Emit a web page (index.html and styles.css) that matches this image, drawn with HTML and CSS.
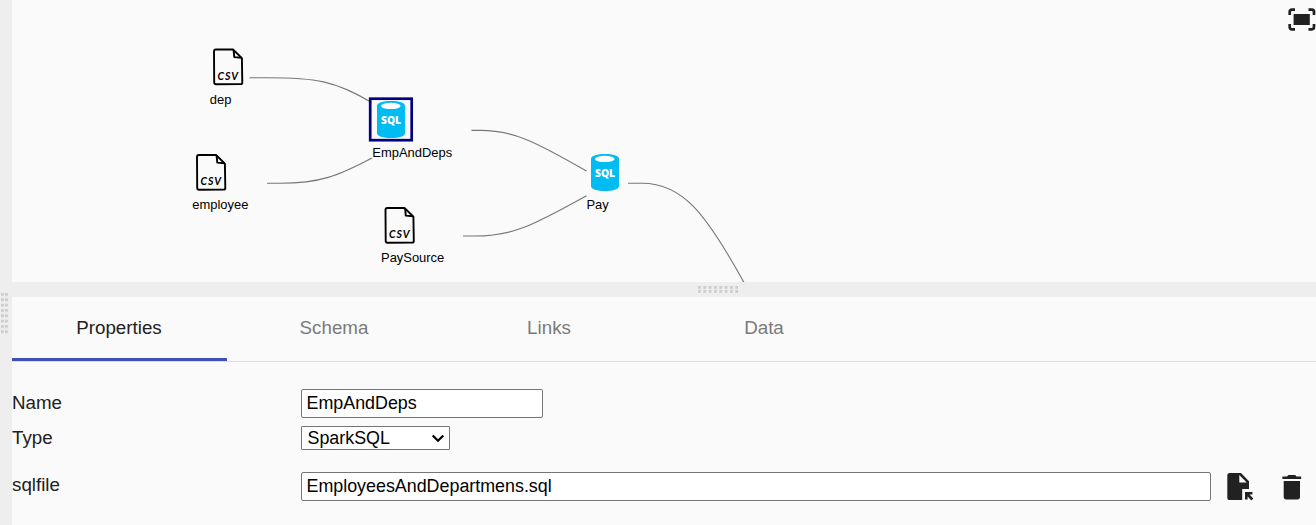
FILE: index.html
```html
<!DOCTYPE html>
<html lang="en">
<head>
<meta charset="utf-8">
<title>Pipeline editor</title>
<link rel="stylesheet" href="styles.css">
</head>
<body>
<div class="app">
  <div class="side-splitter">
    <svg class="grip" width="12" height="42">
      <defs>
        <pattern id="gripV" width="4.1" height="5.33" patternUnits="userSpaceOnUse" x="1" y="0"><rect width="3" height="2.9" fill="#cecece"/></pattern>
      </defs>
      <rect x="1" y="0" width="7.2" height="41" fill="url(#gripV)"/>
    </svg>
  </div>
  <main class="main">
    <section class="canvas">
      <svg class="graph" viewBox="12 0 1304 282" width="1304" height="282">
        <defs>
          <g id="csv">
            <path d="M2.8 1H20L28.9 9.6 29.3 34Q29.3 35.6 27.6 35.6L3 35.7Q1.2 35.7 1.2 34L1 3Q1 1 2.8 1Z" fill="none" stroke="#000" stroke-width="1.9" stroke-linejoin="round"/>
            <path d="M20.6 1.6L21.3 8.6 28.4 9.2" fill="none" stroke="#000" stroke-width="1.9" stroke-linejoin="round"/>
            <text class="csv-text" x="4.6" y="31.4">CSV</text>
          </g>
          <g id="sql">
            <path d="M0 5C0 1.8 6 0 14 0S28 1.8 28 5V32C28 35.3 22 37 14 37S0 35.3 0 32Z" fill="#00bcf2"/>
            <ellipse cx="13.8" cy="4.9" rx="9.8" ry="3.2" fill="#fff"/>
            <text class="sql-text" x="4" y="23.4" textLength="20" lengthAdjust="spacingAndGlyphs">SQL</text>
          </g>
        </defs>
        <g class="links">
          <path d="M249.5 77.7H267C315 77.7 335 80.5 371.5 102.5"/>
          <path d="M267 183.3H280C320 183.3 338 176 372 158"/>
          <path d="M471.5 130.4H480C512 130.4 532 139.5 586.5 171"/>
          <path d="M463 236H475C512 236 530 227 586.5 195.7"/>
          <path d="M628 183.2H642C682 183.2 705 212 744 282.5"/>
        </g>
        <use href="#csv" x="213" y="48.5"/>
        <use href="#csv" x="196" y="154"/>
        <use href="#csv" x="384.5" y="207"/>
        <rect x="370.2" y="98.7" width="41.5" height="41.5" fill="none" stroke="#000080" stroke-width="2.7"/>
        <use href="#sql" x="377" y="101"/>
        <use href="#sql" x="591" y="154"/>
        <g class="node-label">
          <text x="209.8" y="104">dep</text>
          <text x="192.3" y="209">employee</text>
          <text x="372.3" y="157">EmpAndDeps</text>
          <text x="381" y="262">PaySource</text>
          <text x="586.4" y="209">Pay</text>
        </g>
      </svg>
      <svg class="fit" width="28" height="23" viewBox="0 0 28 23">
        <path d="M1.7 7V3.9Q1.7 1.7 3.9 1.7H7M20.5 1.7H23.8Q26 1.7 26 3.9V7M26 16V19.1Q26 21.3 23.8 21.3H20.5M7 21.3H3.9Q1.7 21.3 1.7 19.1V16" fill="none" stroke="#212121" stroke-width="2.7"/>
        <rect x="5.6" y="6" width="16.2" height="11" fill="#212121"/>
      </svg>
    </section>
    <div class="splitter">
      <svg class="grip-h" width="42" height="7">
        <defs>
          <pattern id="gripH" width="5.33" height="4.1" patternUnits="userSpaceOnUse"><rect width="2.9" height="3" fill="#cecece"/></pattern>
        </defs>
        <rect width="40.2" height="7.2" fill="url(#gripH)"/>
      </svg>
    </div>
    <nav class="tabs">
      <div class="tab active">Properties</div>
      <div class="tab">Schema</div>
      <div class="tab">Links</div>
      <div class="tab">Data</div>
    </nav>
    <section class="form">
      <div class="row row-name">
        <label class="label" for="name">Name</label>
        <input class="field name" id="name" value="EmpAndDeps">
      </div>
      <div class="row row-type">
        <label class="label">Type</label>
        <div class="select"><span>SparkSQL</span>
          <svg width="14" height="9" viewBox="0 0 14 9"><path d="M1.7 1.5L7 6.8 12.3 1.5" fill="none" stroke="#000" stroke-width="2.2"/></svg>
        </div>
      </div>
      <div class="row row-file">
        <label class="label" for="file">sqlfile</label>
        <input class="field file" id="file" value="EmployeesAndDepartmens.sql">
        <svg class="open-icon" width="27" height="28" viewBox="0 0 27 28">
          <path d="M2.8 0H14L22 8.2V16H15.2V27H2.8Q.3 27 .3 24.4V2.6Q.3 0 2.8 0ZM12.3 2V9.4H19.7Z" fill="#212121" fill-rule="evenodd"/>
          <path d="M18 19H25.4V21.6H22.5L26.3 25.4 24.4 27.4 20.6 23.6V26.4H18Z" fill="#212121"/>
        </svg>
        <svg class="delete-icon" width="20" height="25" viewBox="0 0 20 25">
          <path d="M1.7 6H18V21.8Q18 24.4 15.4 24.4H4.3Q1.7 24.4 1.7 21.8ZM.4 1.4H5L6.4 0H13.1L14.5 1.4H19.2V4H.4Z" fill="#212121"/>
        </svg>
      </div>
    </section>
  </main>
</div>
</body>
</html>
```
FILE: styles.css
```css
* { box-sizing: border-box; }
body {
  margin: 0;
  background: #fafafa;
  color: #212121;
  font-family: "Liberation Sans", Arial, sans-serif;
  font-size: 18.76px;
}
svg { display: block; flex: none; }
.app { display: flex; height: 525px; overflow: hidden; }
.side-splitter { width: 12px; flex: none; background: #eee; padding-top: 293px; }
.main { flex: 1; display: flex; flex-direction: column; min-width: 0; }
.canvas { position: relative; height: 282px; overflow: hidden; flex: none; }
.links path { fill: none; stroke: #777; stroke-width: 1.1; }
.node-label { font-size: 12.95px; fill: #000; }
.csv-text { font: italic 700 10.5px Lato, sans-serif; letter-spacing: 0.9px; fill: #000; }
.sql-text { font: 800 11px "Open Sans", sans-serif; fill: #fff; }
.fit { position: absolute; right: 0; top: 8px; }
.splitter { height: 15px; flex: none; background: #eee; display: flex; padding: 4px 0 0 686px; }
.tabs { display: flex; height: 65px; flex: none; border-bottom: 1px solid #dcdcdc; }
.tab {
  width: 215px;
  height: 64px;
  padding-right: 1px;
  line-height: 61px;
  text-align: center;
  color: #7a7a7a;
}
.tab.active { color: #212121; border-bottom: 3px solid #3f51b5; }
.form { display: flex; flex-direction: column; padding-top: 27px; }
.row { display: flex; align-items: center; }
.row-name { height: 29px; }
.row-type { height: 24px; margin-top: 8px; }
.row-file { height: 29px; margin-top: 22px; }
.label { width: 289px; flex: none; line-height: 24px; }
.row-name .label { padding-bottom: 2px; }
.row-file .label { padding-bottom: 4px; }
.field {
  height: 29px;
  padding: 0 4px 0 4.5px;
  border: 1px solid #767676;
  border-radius: 2px;
  background: #fff;
  color: #000;
  font: 17.86px "Liberation Sans", Arial, sans-serif;
}
.name { width: 242px; }
.file { width: 910px; flex: none; }
.select {
  width: 149px;
  height: 24px;
  display: flex;
  align-items: center;
  justify-content: space-between;
  padding: 0 4px 0 5.5px;
  border: 1px solid #767676;
  border-radius: 1px;
  background: #fff;
  color: #000;
  font-size: 17.86px;
}
.open-icon { margin: 1px 0 0 16px; }
.delete-icon { margin: 1px 0 0 28px; }
```
